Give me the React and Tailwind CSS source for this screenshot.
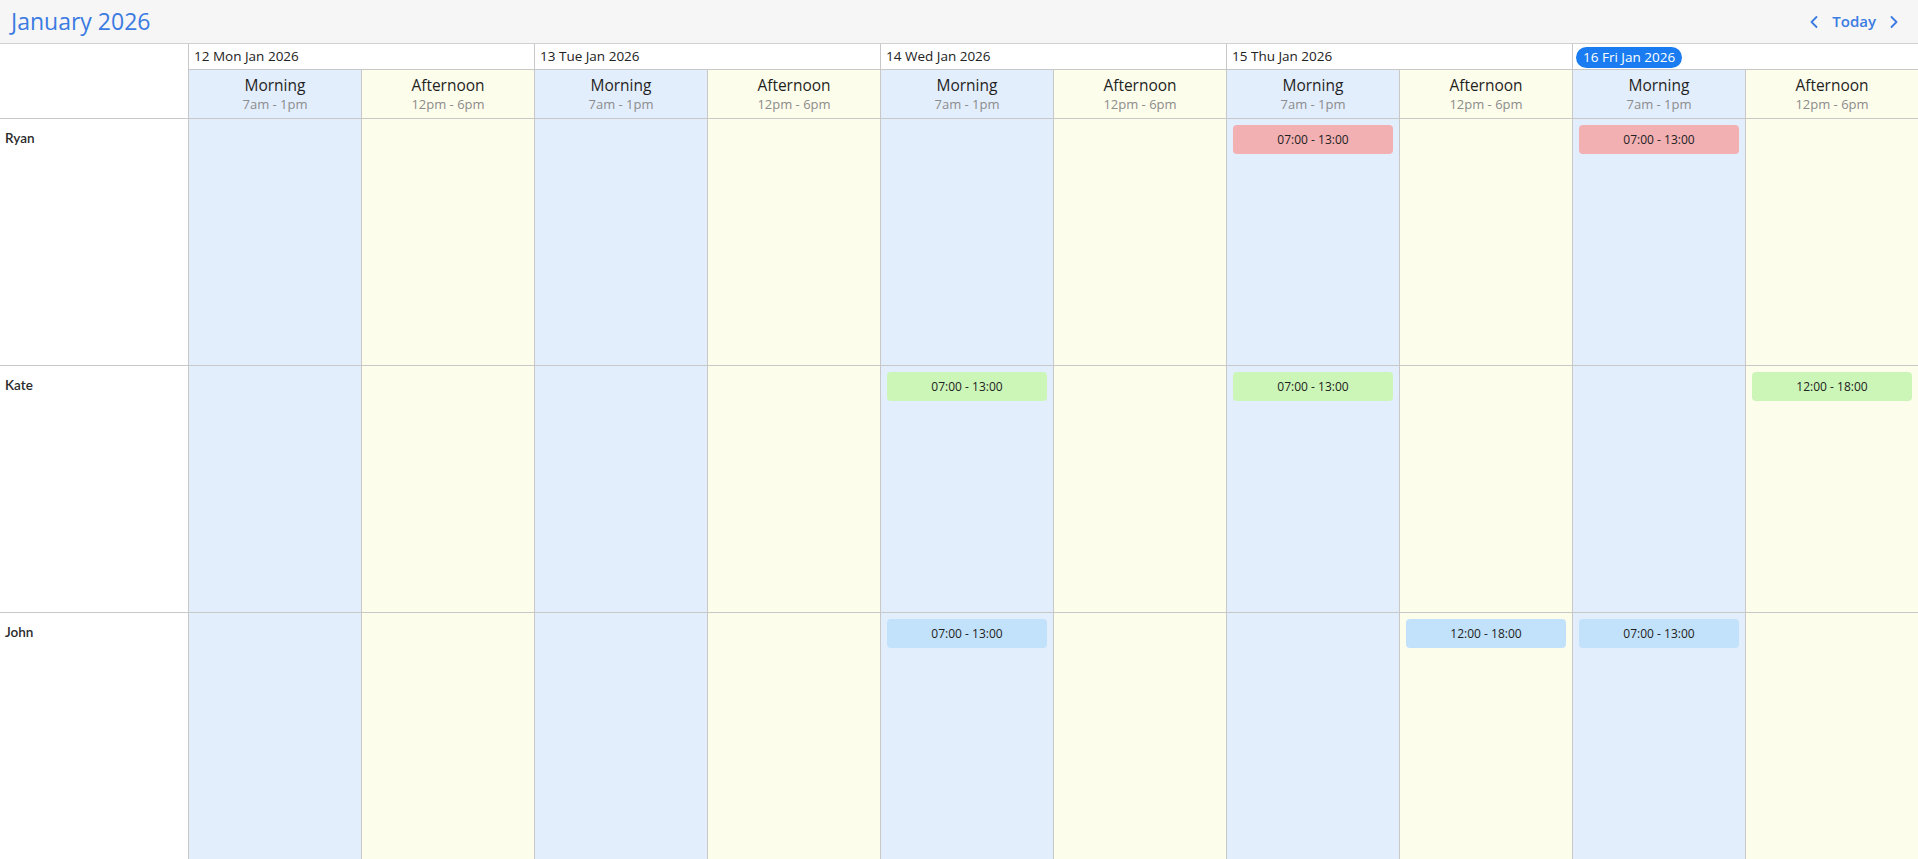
import { ChevronLeft, ChevronRight } from "lucide-react"

const days = [
  { label: "12 Mon Jan 2026" },
  { label: "13 Tue Jan 2026" },
  { label: "14 Wed Jan 2026" },
  { label: "15 Thu Jan 2026" },
  { label: "16 Fri Jan 2026", today: true },
]

const shifts = [
  { name: "Morning", hours: "7am - 1pm", bg: "bg-[#e3eefc]" },
  { name: "Afternoon", hours: "12pm - 6pm", bg: "bg-[#fdfdeb]" },
]

const chipColors = {
  red: "bg-[#f2b0b3]",
  green: "bg-[#ccf6b8]",
  blue: "bg-[#c2e2fb]",
}

// events keyed by "day-shift" index
const people = [
  {
    name: "Ryan",
    events: { "3-0": ["07:00 - 13:00", "red"], "4-0": ["07:00 - 13:00", "red"] },
  },
  {
    name: "Kate",
    events: {
      "2-0": ["07:00 - 13:00", "green"],
      "3-0": ["07:00 - 13:00", "green"],
      "4-1": ["12:00 - 18:00", "green"],
    },
  },
  {
    name: "John",
    events: {
      "2-0": ["07:00 - 13:00", "blue"],
      "3-1": ["12:00 - 18:00", "blue"],
      "4-0": ["07:00 - 13:00", "blue"],
    },
  },
]

export default function App() {
  return (
    <div
      className="h-screen flex flex-col bg-white text-[#222] overflow-hidden"
      style={{ fontFamily: '"Open Sans", "Noto Sans", sans-serif' }}
    >
      {/* top bar */}
      <div className="h-[44px] shrink-0 flex items-center justify-between bg-[#f6f6f6] border-b border-[#d0d0d0] pl-[11px] pr-[14px]">
        <h1 className="text-[23px] text-[#3b7be2] leading-none">January 2026</h1>
        <div className="flex items-center gap-[6px] text-[#3b7be2]">
          <ChevronLeft size={20} strokeWidth={2.2} />
          <span className="text-[15px] font-semibold mx-[2px]">Today</span>
          <ChevronRight size={20} strokeWidth={2.2} />
        </div>
      </div>

      {/* column headers */}
      <div className="flex shrink-0 border-b border-[#c8c8c8]">
        <div className="w-[189px] shrink-0 border-r border-[#c8c8c8]" />
        {days.map((day) => (
          <div key={day.label} className="flex-1 flex flex-col border-r border-[#c8c8c8] last:border-r-0">
            <div className="h-[26px] flex items-center px-[3px] border-b border-[#c8c8c8] text-[13.5px]">
              {day.today ? (
                <span className="bg-[#1a7cf0] text-white rounded-full px-[7px] py-[2px] leading-[17px] mt-[1px]">
                  {day.label}
                </span>
              ) : (
                <span className="pl-[2px]">{day.label}</span>
              )}
            </div>
            <div className="flex h-[48px]">
              {shifts.map((s, i) => (
                <div
                  key={s.name}
                  className={`flex-1 flex flex-col items-center justify-center pt-[1px] ${s.bg} ${i === 0 ? "border-r border-[#c8c8c8]" : ""}`}
                >
                  <div className="text-[15.5px] leading-[20px] font-medium text-[#1f1f1f]">{s.name}</div>
                  <div className="text-[13px] leading-[19px] text-[#8c8c8c]">{s.hours}</div>
                </div>
              ))}
            </div>
          </div>
        ))}
      </div>

      {/* rows */}
      {people.map((p, ri) => (
        <div
          key={p.name}
          className={`flex ${ri === people.length - 1 ? "flex-1" : "h-[247px] shrink-0 border-b border-[#c8c8c8]"}`}
        >
          <div className="w-[189px] shrink-0 border-r border-[#c8c8c8] pl-[5px] pt-[6px]">
            <span className="text-[13.5px] font-semibold text-[#2a2a2a]" style={{ fontFamily: "Lato, sans-serif" }}>
              {p.name}
            </span>
          </div>
          {days.map((day, di) => (
            <div key={day.label} className="flex-1 flex border-r border-[#c8c8c8] last:border-r-0">
              {shifts.map((s, si) => {
                const ev = p.events[`${di}-${si}`]
                return (
                  <div
                    key={s.name}
                    className={`flex-1 ${s.bg} px-[6px] pt-[6px] ${si === 0 ? "border-r border-[#c8c8c8]" : ""}`}
                  >
                    {ev && (
                      <div
                        className={`h-[29px] rounded-[4px] flex items-center justify-center text-[12px] text-[#222] ${chipColors[ev[1]]}`}
                      >
                        {ev[0]}
                      </div>
                    )}
                  </div>
                )
              })}
            </div>
          ))}
        </div>
      ))}
    </div>
  )
}
